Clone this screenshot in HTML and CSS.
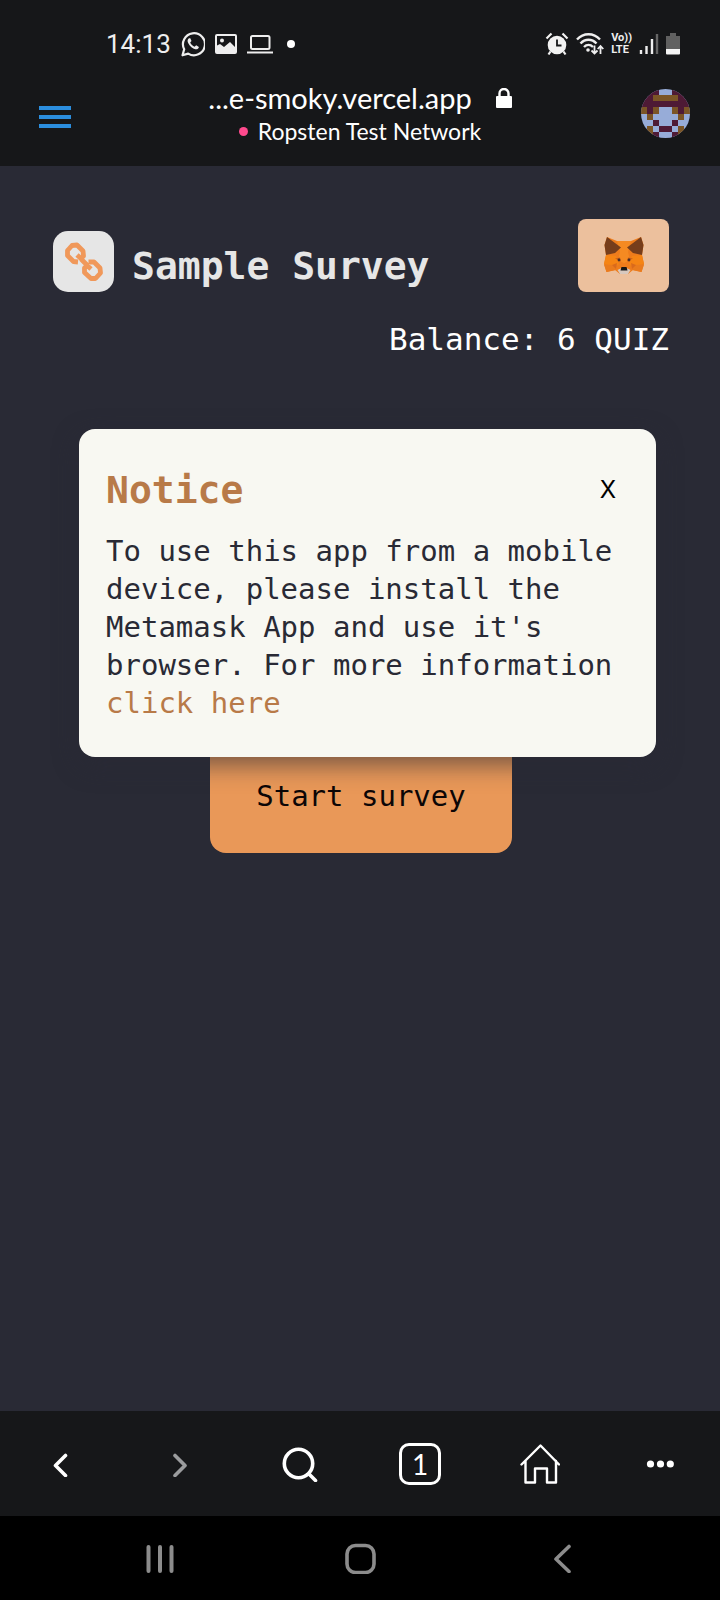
FILE: index.html
```html
<!DOCTYPE html>
<html lang="en">
<head>
<meta charset="utf-8">
<meta name="viewport" content="width=device-width, initial-scale=1">
<title>Sample Survey</title>
<link rel="stylesheet" href="styles.css">
</head>
<body>
<div class="screen">
  <div class="status">
    <div class="status-group">
      <span class="clock">14:13</span>
      <svg width="24" height="26" viewBox="0 0 24 26" fill="none" stroke="#eee"><path d="M1.5 24.3l1.7-6A11 11 0 1 1 7.2 22.6z" stroke-width="2.2" stroke-linejoin="round"/><path d="M8 7.2c-1.7 1-1.8 3-.7 5 1.700 3.200 4.300 5.200 7 6 1.700.4 3.300-.6 3.600-2.300l-2.700-1.700-1.600 1.500c-2-.8-3.500-2.200-4.400-4.200L10.500 10 9.300 7.200z" fill="#eee" stroke="none"/></svg>
      <svg width="22" height="20" viewBox="0 0 22 20"><rect x="1" y="1" width="20" height="18" rx="1" fill="none" stroke="#eee" stroke-width="2"/><circle cx="7" cy="6.500" r="2" fill="#eee"/><path d="M1 12l4-2 4 3 6-5 6 6v5H1z" fill="#eee"/></svg>
      <svg width="26" height="20" viewBox="0 0 26 20" fill="none" stroke="#eee" stroke-width="2"><rect x="4" y="2" width="18.500" height="13" rx="1.500"/><path d="M0 18.500h26"/></svg>
      <span class="more-dot"></span>
    </div>
    <div class="status-group status-right">
      <svg width="24" height="24" viewBox="0 0 24 24"><circle cx="12" cy="13" r="9.300" fill="#f2f2f2"/><path d="M1.500 6.500l5-5M22.500 6.500l-5-5M5.500 19.500l-2 3M18.500 19.500l2 3" stroke="#f2f2f2" stroke-width="2.200" fill="none"/><path d="M12 7.500v6h4.500" stroke="#161719" stroke-width="1.800" fill="none"/></svg>
      <svg width="28" height="24" viewBox="0 0 28 24" fill="none" stroke="#eee" stroke-width="2.400"><path d="M1 7.500c6.500-7 16.500-7 23 0M4.500 11.500c4.500-5 11.500-5 16 0M8 15c2.700-2.800 6.300-2.800 9 0"/><circle cx="12" cy="18" r="1.800" fill="#eee" stroke="none"/><path d="M18.500 13.500v8M15.500 18.500l3 3 3-3M24.500 22v-8M21.700 17l2.800-3 2.800 3" stroke-width="1.800"/></svg>
      <span class="volte"><span>Vo))</span><span>LTE</span></span>
      <svg width="20" height="20" viewBox="0 0 20 20" stroke-width="2.400"><path d="M2 20v-4M7.500 20v-8M13 20V5" stroke="#eee"/><path d="M18 20V0" stroke="#666"/></svg>
      <svg width="14" height="22" viewBox="0 0 14 22"><path d="M0 3h4V0h6v3h4v13H0z" fill="#606060"/><path d="M0 16h14v4.500q0 1-1 1H1q-1 0-1-1z" fill="#f4f4f4"/></svg>
    </div>
  </div>

  <header class="browser">
    <button class="icon-btn menu-btn" aria-label="Menu"><svg width="32" height="22" viewBox="0 0 32 22" fill="#2b8ede"><path d="M0 0h32v4H0zM0 9h32v4H0zM0 18h32v4H0z"/></svg></button>
    <div class="address">
      <div class="url">...e-smoky.vercel.app
        <svg width="16" height="20" viewBox="0 0 16 20"><rect y="8" width="16" height="12" rx="1" fill="#fff"/><path d="M3.500 9V5.500a4.500 4.500 0 0 1 9 0V9" fill="none" stroke="#fff" stroke-width="2.400"/></svg>
      </div>
      <div class="network"><span class="net-dot"></span>Ropsten Test Network</div>
    </div>
    <button class="icon-btn avatar" aria-label="Account">
      <svg width="49" height="49" viewBox="0 0 8 8" shape-rendering="crispEdges"><rect width="8" height="8" fill="#97acd8"/><path d="M0 0h3v1H0zM5 0h3v1H5zM0 1h2v1H0zM6 1h2v1H6zM0 2h8v1H0zM1 3h1v1H1zM6 3h1v1H6zM2 5h1v1H2zM5 5h1v1H5zM3 6h2v1H3zM2 7h1v1H2zM5 7h1v1H5z" fill="#4e1a35"/><path d="M2 1h4v1H2zM0 3h1v1H0zM2 3h1v1H2zM5 3h1v1H5zM7 3h1v1H7zM1 4h1v1H1zM6 4h1v1H6zM1 6h1v2H1zM6 6h1v2H6z" fill="#7b5526"/></svg>
    </button>
  </header>

  <main class="page">
    <div class="topline">
      <div class="brand">
        <span class="logo"><svg width="40" height="40" viewBox="0 0 40 40" fill="none" stroke="#f0985a" stroke-width="4.800" stroke-linejoin="round"><path d="M14 20L9.500 19.500 3.500 13.500 3.500 8.500 8 3.500 13 3 19 9 19.500 14 17 16.500 13 13M24.500 20L30 20 36 26 36.500 31 31.500 36.500 27 36.500 20.500 30.500 20.500 26 23 23.500 27 27M17 17l7 7"/></svg></span>
        <h1>Sample Survey</h1>
      </div>
      <button class="wallet" aria-label="MetaMask wallet">
        <svg width="40" height="37" viewBox="0 0 40 37"><path d="M3 0L13 4h14L37 0l2.500 8-1.500 10 2 9-2.500 8-8.500-2-5 4h-8l-5-4-8.500 2L0 27l2-9L.5 8z" fill="#ee7c1c"/><path d="M13 4h14l-3 11 2 8-6 3-6-3 2-8z" fill="#f58a22"/><path d="M3 0L17 10.500 11 16 2 18 .5 8zM37 0L23 10.500l6 5.500 9 2L39.500 8z" fill="#763d1b"/><path d="M0 27l2-9 10 1 3 8-4 3zM40 27l-2-9-10 1-3 8 4 3z" fill="#f58414"/><path d="M2.500 35L0 27.500l10 .5 2 5zM37.500 35l2.500-7.500-10 .5-2 5z" fill="#ea7b1d"/><path d="M8 28l5-2-1 6zM32 28l-5-2 1 6z" fill="#d96a1c"/><path d="M11 21.500l5-1 1 4zM29 21.500l-5-1-1 4z" fill="#c95f19"/><circle cx="15" cy="23" r="1.400" fill="#4a2f2a"/><circle cx="25" cy="23" r="1.400" fill="#4a2f2a"/><path d="M13.500 33l3-1.500h7l3 1.500-2.500 4h-8z" fill="#d7c8be"/><path d="M17.500 30h5l1 3.500h-7z" fill="#161616"/></svg>
      </button>
    </div>
    <p class="balance">Balance: 6 QUIZ</p>
    <div class="survey"><button class="start">Start survey</button></div>

    <section class="notice" role="dialog" aria-labelledby="notice-title">
      <div class="notice-head">
        <h2 id="notice-title">Notice</h2>
        <button class="close" aria-label="Close">X</button>
      </div>
      <p>To use this app from a mobile device, please install the Metamask App and use it's browser. For more information <a href="#">click here</a></p>
    </section>
  </main>

  <nav class="toolbar" aria-label="Browser">
    <button class="icon-btn" aria-label="Back"><svg width="24" height="26" viewBox="0 0 24 26" fill="none" stroke="#fff" stroke-width="3.600" stroke-linecap="round" stroke-linejoin="round"><path d="M17.500 4.500L7.500 14.500l10 10"/></svg></button>
    <button class="icon-btn" aria-label="Forward"><svg width="24" height="26" viewBox="0 0 24 26" fill="none" stroke="#9b9c9e" stroke-width="3.600" stroke-linecap="round" stroke-linejoin="round"><path d="M7 4.500l10 10-10 10"/></svg></button>
    <button class="icon-btn" aria-label="Search"><svg width="36" height="36" viewBox="0 0 36 36" fill="none" stroke="#fff" stroke-width="3.600" stroke-linecap="round"><circle cx="16.500" cy="17.500" r="14.200"/><path d="M27 28l6.500 6.500"/></svg></button>
    <button class="icon-btn tabs" aria-label="Tabs">1</button>
    <button class="icon-btn" aria-label="Home"><svg width="40" height="40" viewBox="0 0 40 40" fill="none" stroke="#fff" stroke-width="2.400" stroke-linecap="round" stroke-linejoin="round"><path d="M1.500 20.500L20.500 1.500 39 20.500M5.500 17v21.500h9.500v-14h12v14H36V17"/></svg></button>
    <button class="icon-btn" aria-label="More"><svg width="28" height="8" viewBox="0 0 28 8" fill="#fff"><circle cx="4.500" cy="4" r="3.600"/><circle cx="14.500" cy="4" r="3.600"/><circle cx="24.300" cy="4" r="3.600"/></svg></button>
  </nav>
  <nav class="system" aria-label="System">
    <button class="icon-btn" aria-label="Recent apps"><svg width="28" height="30" viewBox="0 0 28 30" stroke="#8c8c8c" stroke-width="4" stroke-linecap="round"><path d="M2.500 4v24M14 4v24M25.500 4v24"/></svg></button>
    <button class="icon-btn" aria-label="Home screen"><svg width="32" height="32" viewBox="0 0 32 32" fill="none" stroke="#8c8c8c" stroke-width="3.600"><rect x="3" y="3.500" width="27" height="27" rx="8.500"/></svg></button>
    <button class="icon-btn" aria-label="System back"><svg width="22" height="30" viewBox="0 0 22 30" fill="none" stroke="#8c8c8c" stroke-width="3.600" stroke-linecap="round" stroke-linejoin="round"><path d="M20 3.500L7 16l13 12.500"/></svg></button>
  </nav>
</div>
</body>
</html>
```
FILE: styles.css
```css
* { box-sizing: border-box; }
body { margin: 0; background: #292a35; }
h1, h2, p { margin: 0; }
button { margin: 0; padding: 0; border: 0; cursor: pointer; }
svg { display: block; flex: none; }

.screen { display: flex; flex-direction: column; min-height: 100vh; }
.icon-btn { display: flex; align-items: center; justify-content: center; background: none; }

.status {
  display: flex;
  justify-content: space-between;
  align-items: center;
  padding: 28px 40px 0 106px;
  height: 60px;
  background: #161719;
  color: #eee;
}
.status-group { display: flex; align-items: center; gap: 10px; }
.status-right { gap: 7px; }
.clock { font: 26px/32px Roboto, sans-serif; }
.more-dot { width: 8px; height: 8px; margin-left: 4px; border-radius: 50%; background: #fff; }
.volte { display: flex; flex-direction: column; font: 700 11px/12px Roboto, sans-serif; }

.browser {
  display: grid;
  grid-template-columns: 49px 1fr 49px;
  align-items: center;
  height: 106px;
  padding: 0 30px;
  background: #161719;
  color: #fff;
}
.menu-btn { padding-top: 8px; }
.address { display: flex; flex-direction: column; align-items: center; padding-top: 2px; }
.url { display: flex; align-items: center; gap: 24px; font: 29px/34px Lato, sans-serif; }
.network { display: flex; align-items: center; gap: 10px; font: 23px/32px Lato, sans-serif; }
.net-dot { width: 9px; height: 9px; border-radius: 50%; background: #ff4a8d; }
.avatar { width: 49px; height: 49px; border-radius: 50%; overflow: hidden; }

.page {
  position: relative;
  flex: 1;
  padding: 53px 51px 32px 53px;
  background: #292a35;
  font-family: "DejaVu Sans Mono", monospace;
}
.topline { display: flex; justify-content: space-between; align-items: flex-end; }
.brand { display: flex; align-items: flex-end; gap: 18px; }
.logo {
  display: flex;
  align-items: center;
  justify-content: center;
  width: 61px;
  height: 61px;
  border-radius: 15px;
  background: #e6e6e6;
}
h1 { color: #e6e6e6; font-size: 38px; line-height: 52px; }
.wallet {
  display: flex;
  align-items: center;
  justify-content: center;
  width: 91px;
  height: 73px;
  border-radius: 8px;
  background: #ecc09d;
}
.balance { margin-top: 27px; color: #fff; font-size: 31px; line-height: 40px; text-align: right; }
.survey { display: flex; justify-content: center; padding-top: 382px; }
.start {
  padding: 38px 46px 40px;
  border-radius: 16px;
  background: #e99858;
  color: #0c0606;
  font: 29px/34px "DejaVu Sans Mono", monospace;
}

.notice {
  position: absolute;
  top: 263px;
  left: 79px;
  right: 64px;
  padding: 37px 27px 35px;
  border-radius: 16px;
  background: #f8f8f2;
  color: #292a35;
  box-shadow: 0 8px 24px rgba(41, 42, 53, 0.6);
}
.notice-head { display: flex; justify-content: space-between; align-items: center; margin-bottom: 18px; }
h2 { color: #b87a48; font-size: 38px; line-height: 48px; }
.close { width: 42px; height: 44px; background: none; color: #000; font: 24px/42px Inter, sans-serif; }
.notice p { font-size: 29px; line-height: 38px; }
.notice a { color: #b87a48; text-decoration: none; }

.toolbar {
  display: grid;
  grid-template-columns: repeat(6, 1fr);
  align-items: center;
  justify-items: center;
  height: 105px;
  background: #161719;
}
.tabs {
  width: 42px;
  height: 42px;
  border: 3px solid #fff;
  border-radius: 10px;
  color: #fff;
  font: 28px/36px Lato, sans-serif;
}
.system {
  display: grid;
  grid-template-columns: repeat(3, 1fr);
  align-items: center;
  justify-items: center;
  height: 84px;
  padding: 0 60px;
  background: #000;
}
```
